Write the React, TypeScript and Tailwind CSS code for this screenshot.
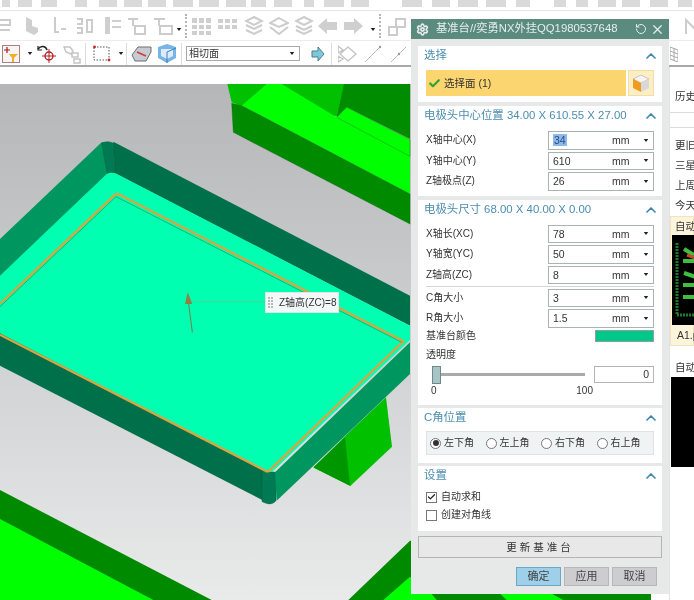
import { ChevronUp, RotateCw, Settings, X, Check } from "lucide-react";
import type { ReactNode } from "react";

const FONT = "font-['Liberation_Sans','Noto_Sans_CJK_SC',sans-serif]";

// [left gap, width] of the faded icons in the clipped top row
const TOP_ICONS = [[2, 8], [8, 14], [9, 16], [18, 12], [12, 18], [7, 18], [6, 18], [7, 20], [6, 20], [7, 20], [5, 15], [8, 18], [12, 10], [10, 20], [7, 18], [33, 20], [10, 18], [8, 20], [8, 20], [10, 14], [24, 12], [10, 12], [10, 18], [6, 18], [10, 18], [10, 14]];

const Caret = ({ className = "" }: { className?: string }) => (
  <svg viewBox="0 0 6 4" className={`h-[3px] w-[6px] shrink-0 ${className}`}>
    <path d="M0 0h6L3 4Z" fill="#222" />
  </svg>
);

const DottedSep = ({ className = "" }: { className?: string }) => (
  <span className={`h-[24px] w-px shrink-0 border-l-2 border-dotted border-[#b5b5b5] ${className}`} />
);

const Sep = ({ className = "" }: { className?: string }) => (
  <span className={`h-[22px] w-px shrink-0 bg-[#dcdcdc] ${className}`} />
);

const Faded = ({ d, className = "" }: { d: string; className?: string }) => (
  <svg viewBox="0 0 20 20" className={`h-[20px] w-[20px] shrink-0 ${className}`}>
    <path d={d} fill="none" stroke="#cccccc" strokeWidth="2" />
  </svg>
);

const Solid = ({ d, className = "" }: { d: string; className?: string }) => (
  <svg viewBox="0 0 20 20" className={`h-[20px] w-[20px] shrink-0 ${className}`}>
    <path d={d} fill="#cfcfcf" />
  </svg>
);

const TopRow = () => (
  <div className="flex h-[11px] items-start overflow-hidden border-b border-[#e6e6e6]">
    {TOP_ICONS.map(([gap, w], i) => (
      <span key={i} className="h-[7px] shrink-0 bg-[#dadada]" style={{ marginLeft: gap, width: w }} />
    ))}
  </div>
);

const MiddleRow = () => (
  <div className="flex h-[30px] items-center overflow-hidden border-b border-[#ececec]">
    <Faded d="M-2 4h16v5H0v5h14" className="-ml-1" />
    <Solid d="M4 1l6 3v6l6 2v4l-4 3-8-4Z" className="ml-[6px]" />
    <Faded d="M6 1v15h4M12 13h5" className="ml-[7px]" />
    <Faded d="M2 3h5v5H2M2 12h5v5H2M12 4h5v12h-5Z" className="ml-[6px]" />
    <Solid d="M2 1h5v17H2ZM9 4h9v2H9ZM9 10h9v2H9Z" className="ml-[8px]" />
    <Faded d="M1 3h10M6 3v7M8 10h10v8H8Z" className="ml-[4px]" />
    <Faded d="M1 3h11M6 3v7M7 10h12v8H7Z" className="ml-[6px]" />
    <Caret className="ml-[3px] mt-[8px]" />
    <DottedSep className="ml-[3px]" />
    <Solid d="M0 2h5v5H0ZM7 2h5v5H7ZM14 2h5v5h-5ZM0 9h5v4H0ZM7 9h5v4H7ZM14 9h5v4h-5ZM0 15h5v4H0ZM7 15h5v4H7ZM14 15h5v4h-5Z" className="ml-[5px]" />
    <Solid d="M0 3h5v4H0ZM7 3h5v4H7ZM14 3h5v4h-5ZM0 9h5v4H0ZM7 9h5v4H7ZM14 9h5v4h-5Z" className="ml-[6px]" />
    <Faded d="M10 1l8 4-8 4-8-4ZM2 9l8 4 8-4M2 14l8 4 8-4" className="ml-[6px]" />
    <Faded d="M10 2l9 5-9 4-9-4ZM1 11l9 7 9-7" className="ml-[5px]" />
    <Faded d="M10 1l8 4-8 4-8-4ZM2 10l8 4 8-4M2 14l8 4 8-4" className="ml-[5px]" />
    <Solid d="M0 10l9-8v4h10v8H9v4Z" className="ml-[4px]" />
    <Solid d="M20 10l-9-8v4H1v8h10v4Z" className="ml-[5px]" />
    <Caret className="ml-[7px] mt-[8px]" />
    <DottedSep className="ml-[3px]" />
    <Faded d="M2 11h8v8H2ZM9 3h9v8H9Z" className="ml-[6px]" />
    <Faded d="M3 18V4l14 14V4" className="ml-[276px]" />
  </div>
);

const ToolRow = () => (
  <div className="flex h-[24px] items-center pt-[1px]">
    <svg viewBox="0 0 18 18" className="ml-[2px] h-[18px] w-[18px] shrink-0">
      <rect x=".5" y=".5" width="17" height="17" fill="#f8f4f2" stroke="#a98080" />
      <path d="M7 9h9l-4 4v4h-2v-4Z" fill="#edb02a" />
      <path d="M2 5h6M5 2v6" stroke="#a21d1d" strokeWidth="1.2" />
    </svg>
    <Caret className="ml-[7px]" />
    <svg viewBox="0 0 20 20" className="ml-[4px] h-[20px] w-[20px] shrink-0">
      <path d="M1 5c3-4 8-3 9 1" fill="none" stroke="#222" strokeWidth="1.5" />
      <path d="M1 2v4h4" fill="none" stroke="#222" strokeWidth="1.2" />
      <circle cx="12" cy="12" r="4" fill="none" stroke="#b32020" strokeWidth="1.4" />
      <path d="M12 5v14M5 12h14" stroke="#b32020" />
    </svg>
    <svg viewBox="0 0 20 20" className="ml-[5px] h-[20px] w-[20px] shrink-0">
      <path d="M2 3h6l3 4-2 3-5-2ZM10 9h6v4h-6ZM12 15h6v4h-6Z" fill="none" stroke="#c5c5c5" strokeWidth="1.5" />
    </svg>
    <Sep className="ml-[3px]" />
    <svg viewBox="0 0 18 18" className="ml-[7px] h-[18px] w-[18px] shrink-0">
      <rect x="1" y="2" width="15" height="13" fill="none" stroke="#555" strokeDasharray="1.5 1.5" />
      <circle cx="1.5" cy="2" r="1.4" fill="#c72626" />
      <circle cx="16" cy="15" r="1.4" fill="#c72626" />
    </svg>
    <Caret className="ml-[7px]" />
    <Sep className="ml-[2px]" />
    <svg viewBox="0 0 21 18" className="ml-[4px] h-[18px] w-[21px] shrink-0">
      <path d="M1 10l6-8h13v5l-5 9H4Z" fill="#c6ccd2" stroke="#6d6d6d" />
      <path d="M6 7l9 4" stroke="#cf3a3a" strokeWidth="1.6" />
    </svg>
    <svg viewBox="0 0 20 19" className="ml-[5px] h-[19px] w-[20px] shrink-0">
      <path d="M1 3l9-3 9 3v11l-9 5-9-5Z" fill="#79b4e6" />
      <path d="M4 5h12v7l-6 3-6-3Z" fill="#dcebf7" />
      <path d="M10 8v11M19 4l-9 4" stroke="#3d7cc0" />
    </svg>
    <Sep className="ml-[4px]" />
    <div className="ml-[4px] flex h-[15px] w-[114px] shrink-0 items-center justify-between border border-[#a8a8a8] bg-white pl-[2px] pr-[4px]">
      <span className="text-[10px] leading-none text-[#333]">相切面</span>
      <Caret />
    </div>
    <svg viewBox="0 0 14 14" className="ml-[11px] h-[14px] w-[14px] shrink-0">
      <path d="M1 4h6V0l6 7-6 7v-4H1Z" fill="#7fc8da" stroke="#4a7f95" />
    </svg>
    <Sep className="ml-[6px]" />
    <svg viewBox="0 0 20 18" className="ml-[6px] h-[18px] w-[20px] shrink-0">
      <path d="M10 2l8 7-8 7-8-7ZM0 1l5 4-5 3ZM0 11l5 3-5 3Z" fill="none" stroke="#c2c2c2" strokeWidth="1.3" />
    </svg>
    <svg viewBox="0 0 18 18" className="ml-[6px] h-[18px] w-[18px] shrink-0">
      <path d="M1 17L16 2" stroke="#b9b9b9" />
      <circle cx="16" cy="2" r="1.2" fill="#999" />
    </svg>
    <svg viewBox="0 0 18 18" className="ml-[8px] h-[18px] w-[18px] shrink-0">
      <path d="M1 17L16 2" stroke="#b9b9b9" />
      <circle cx="9" cy="9" r="1.2" fill="#999" />
    </svg>
    <svg viewBox="0 0 8 16" className="ml-[262px] h-[16px] w-[8px] shrink-0">
      <path d="M0 1l8 3v12L0 13ZM0 5l8 3M0 9l8 3M4 2v13" fill="none" stroke="#a9a9a9" />
    </svg>
  </div>
);

// drawn in 3x coordinates, same scale as the part left of the dialog
const Scene = () => (
  <svg viewBox="0 0 1953 1548" className="h-[516px] w-[651px] shrink-0">
    <path d="M682 0h360v100l-320-35-27-10Z" fill="#00c000" />
    <path d="M1032 0h198v165l-190-95-30 30Z" fill="#008c00" />
    <path d="M725 65L800 0h45L1010 100L1230 215v115Z" fill="#00ff00" />
    <path d="M1040 70l190 97v50L1010 100Z" fill="#00ff00" stroke="#0a6a0a" strokeWidth="1" />
    <path d="M695 58l30 7 505 265v90L700 145Z" fill="#008a00" stroke="#0a5a0a" strokeWidth="1" />

    <path d="M1158 940l18 148-125 118-110-55 100-100Z" fill="#00c000" />
    <path d="M1035 1060l15 145-110-55Z" fill="#009600" />

    <path d="M0 1218L635 1548H0Z" fill="#008a00" />
    <path d="M0 1305L460 1548H0Z" fill="#00ff00" />
    <path d="M1045 1548L1230 1370L1953 1500V1548Z" fill="#008a00" />
    <path d="M1150 1548l80-70 60 70ZM1470 1500h130l90 48h-170ZM1230 1500h40l40 48h-80Z" fill="#00ff00" />

    <path d="M0 465L305 175L325 173L345 265L0 580Z" fill="#00965f" />
    <path d="M340 173L1230 635V725L345 268Z" fill="#00704a" />
    <path d="M305 178q18-10 36 0l6 90-25 2Z" fill="#007a52" stroke="#004e33" strokeWidth="1" />
    <path d="M0 745L795 1160L810 1260L0 845Z" fill="#00704a" />
    <path d="M785 1160l45 5-2 85q-12 14-30 8l-12-5Z" fill="#007a52" stroke="#004e33" strokeWidth="1" />
    <path d="M825 1165L1230 775V870L830 1250Z" fill="#00965f" />
    <path d="M0 575L320 270q18-8 35 2L1230 725V768L820 1160q-10 8-25 0L0 748Z" fill="#00ffb0" />
    <path d="M0 660L345 332q7-4 14 0L1210 772L808 1160q-6 4-12 0L0 752" fill="none" stroke="#d9a441" strokeWidth="7" />
    <path d="M0 668L348 338L1205 775" fill="none" stroke="#0f7a2e" strokeWidth="1.5" />

    <path d="M580 653H800" stroke="#6fbf85" strokeWidth="2" />
    <path d="M566 660L577 745" stroke="#7d7f45" strokeWidth="3" />
    <path d="M563 625l-8 35h22Z" fill="#8f8048" />
  </svg>
);

const SectionHead = ({ title }: { title: string }) => (
  <div className="flex h-[20px] items-center justify-between pl-[6px] pr-[3px]">
    <span className="text-[11.4px] leading-none text-[#4c8db0]">{title}</span>
    <ChevronUp size={16} strokeWidth={2.5} className="text-[#3d86ad]" />
  </div>
);

const Section = ({ title, children, className = "" }: { title: string; children: ReactNode; className?: string }) => (
  <section className={`shrink-0 bg-white ${className}`}>
    <SectionHead title={title} />
    {children}
  </section>
);

const Field = ({ label, value, selected }: { label: string; value: string; selected?: boolean }) => (
  <div className="flex h-[20.5px] items-center justify-between pl-[8px] pr-[8px]">
    <span className="text-[10px] leading-none text-[#333]">{label}</span>
    <div className="flex h-[18.5px] w-[106px] items-center border border-[#a9b3b3] bg-white pl-[4px] pr-[4px] text-[10.5px] text-[#333]">
      <span className={`w-[50px] leading-none ${selected ? "text-[#1d4f8f]" : ""}`}>
        {selected ? <span className="bg-[#8fb8e8] px-px">{value}</span> : value}
      </span>
      <span className="ml-[9px] text-[10.5px] leading-none">mm</span>
      <Caret className="ml-auto" />
    </div>
  </div>
);

const Radio = ({ label, on }: { label: string; on?: boolean }) => (
  <label className="flex w-[55.5px] items-center gap-[3px] text-[10px] leading-none text-[#333]">
    <span className="flex h-[11px] w-[11px] shrink-0 items-center justify-center rounded-full border border-[#777] bg-white">
      {on && <span className="h-[6px] w-[6px] rounded-full bg-[#333]" />}
    </span>
    {label}
  </label>
);

const CheckRow = ({ label, on }: { label: string; on?: boolean }) => (
  <div className="flex h-[18px] items-center gap-[4px] pl-[8px] text-[10px] leading-none text-[#333]">
    <span className="flex h-[11px] w-[11px] items-center justify-center border border-[#777] bg-white">
      {on && <Check size={10} strokeWidth={3.5} className="text-[#222]" />}
    </span>
    {label}
  </div>
);

const FootButton = ({ label, primary }: { label: string; primary?: boolean }) => (
  <button className={`h-[19px] w-[45px] border text-[11px] leading-none text-[#444] ${primary ? "border-[#6aa7c9] bg-[#9fd0ea]" : "border-[#b7b7b7] bg-[#cdcdcf]"}`}>
    {label}
  </button>
);

const Dialog = () => (
  <div className="absolute left-[411px] top-[19px] flex h-[575px] w-[258px] flex-col bg-[#e7e8e8]">
    <div className="flex h-[20px] shrink-0 items-center bg-[#5b8a7f] pl-[5px] pr-[4px] text-[#e4eeec]">
      <Settings size={13} strokeWidth={3} />
      <span className="ml-[7px] text-[11.3px] leading-none">基准台//奕勇NX外挂QQ1980537648</span>
      <RotateCw size={12} strokeWidth={2} className="ml-auto -scale-x-100" />
      <X size={15} strokeWidth={2} className="ml-[3px]" />
    </div>

    <div className="flex flex-col gap-[4px] px-[7px] pt-[7px]">
      <Section title="选择" className="h-[56px]">
        <div className="mt-[4px] flex h-[26px] pl-[8px] pr-[8px]">
          <div className="flex w-[200px] items-center bg-[#fbd570] pl-[2px] text-[10.5px] text-[#333]">
            <Check size={13} strokeWidth={4} className="text-[#2fa52f]" />
            <span className="ml-[3px] leading-none">选择面 (1)</span>
          </div>
          <div className="ml-[2px] flex w-[26px] items-center justify-center border border-[#f3dfa6] bg-[#fdeec4]">
            <svg viewBox="0 0 18 18" className="h-[18px] w-[18px]">
              <path d="M9 1l8 4-8 4-8-4Z" fill="#f5f5f5" stroke="#999" strokeWidth=".5" />
              <path d="M1 5l8 4v9l-8-4Z" fill="#f29a1d" />
              <path d="M17 5l-8 4v9l8-4Z" fill="#d8d8d8" />
            </svg>
          </div>
        </div>
      </Section>

      <Section title="电极头中心位置 34.00 X 610.55 X 27.00" className="h-[90px]">
        <div className="mt-[4px]">
          <Field label="X轴中心(X)" value="34" selected />
          <Field label="Y轴中心(Y)" value="610" />
          <Field label="Z轴极点(Z)" value="26" />
        </div>
      </Section>

      <Section title="电极头尺寸 68.00 X 40.00 X 0.00" className="h-[205px]">
        <div className="mt-[3.5px]">
          <Field label="X轴长(XC)" value="78" />
          <Field label="Y轴宽(YC)" value="50" />
          <Field label="Z轴高(ZC)" value="8" />
          <div className="mx-[8px] mb-[0.5px] mt-[1px] h-px bg-[#d5d5d5]" />
          <Field label="C角大小" value="3" />
          <Field label="R角大小" value="1.5" />
        </div>
        <div className="flex h-[14px] items-center justify-between pl-[8px] pr-[8px]">
          <span className="text-[10px] leading-none text-[#333]">基准台颜色</span>
          <span className="h-[12px] w-[59px] border border-[#8f9f9a] bg-[#00c88a]" />
        </div>
        <div className="mt-[5px] pl-[8px] text-[10px] leading-[14px] text-[#333]">透明度</div>
        <div className="mt-[4px] flex h-[18px] items-center pl-[14px] pr-[8px]">
          <span className="h-[18px] w-[9px] border border-[#6d8a8a] bg-[#a9c4c4]" />
          <span className="h-[3px] w-[144px] bg-[#aaaaaa]" />
          <div className="ml-[9px] flex h-[17px] flex-1 items-center justify-end border border-[#b5b5b5] pr-[4px] text-[10.5px] leading-none text-[#333]">0</div>
        </div>
        <div className="flex w-[175px] justify-between pl-[13px] text-[10px] leading-[13px] text-[#333]">
          <span>0</span>
          <span>100</span>
        </div>
      </Section>

      <Section title="C角位置" className="-mt-px h-[55px]">
        <div className="mx-[8px] mt-[3px] flex h-[24px] items-center border border-[#dfe3e3] bg-[#eff3f4] pl-[3px]">
          <Radio label="左下角" on />
          <Radio label="左上角" />
          <Radio label="右下角" />
          <Radio label="右上角" />
        </div>
      </Section>

      <Section title="设置" className="-mt-px h-[65px]">
        <div className="mt-[2px] flex flex-col">
          <CheckRow label="自动求和" on />
          <CheckRow label="创建对角线" />
        </div>
      </Section>

      <button className="mt-px h-[22px] shrink-0 border border-[#b5b5b5] bg-[#e8e8e8] text-[10.5px] leading-none tracking-[3px] text-[#333]">
        更新基准台
      </button>

      <div className="mt-[5px] flex justify-end gap-[3px] pr-[5px]">
        <FootButton label="确定" primary />
        <FootButton label="应用" />
        <FootButton label="取消" />
      </div>
    </div>
  </div>
);

const HistoryPanel = () => (
  <aside className="ml-[18px] flex min-w-0 flex-1 flex-col overflow-hidden border-l border-[#e3e3e3] bg-white pt-[14px] text-[10.5px] leading-none text-[#333]">
    <div className="flex h-[32px] shrink-0 items-center whitespace-nowrap border-b border-[#dcdcdc] pl-[5px]">历史记录</div>
    <div className="h-[15px] shrink-0 border-b border-[#dcdcdc]" />
    <div className="flex shrink-0 flex-col whitespace-nowrap pl-[5px] pt-[7px]">
      <span className="flex h-[20px] items-center">更旧</span>
      <span className="flex h-[20px] items-center">三星期前</span>
      <span className="flex h-[20px] items-center">上周</span>
      <span className="flex h-[20px] items-center">今天</span>
    </div>
    <div className="mt-px h-[130px] shrink-0 border border-[#f0e4c0] bg-[#fdf4dc] pl-px">
      <div className="flex h-[18px] items-center whitespace-nowrap pl-[3px]">自动保存</div>
      <div className="h-[90px] w-[30px] bg-black">
        <svg viewBox="0 0 24 90" className="h-[90px] w-[24px]">
          <path d="M5 8v72h18" fill="none" stroke="#1f7a2c" strokeWidth="3" strokeDasharray="2 1" />
          <path d="M12 14l10 6M11 26h13M12 38l12 4M11 50h13M11 62h13" stroke="#3fbf3f" strokeWidth="4" />
          <path d="M15 20l8 3" stroke="#c9462a" strokeWidth="3" />
        </svg>
      </div>
      <div className="flex h-[20px] items-center whitespace-nowrap pl-[5px]">A1.prt</div>
    </div>
    <div className="mt-[12px] flex h-[19px] shrink-0 items-center whitespace-nowrap pl-[5px]">自动保存</div>
    <div className="ml-px h-[90px] w-full shrink-0 bg-black" />
  </aside>
);

export default function App() {
  return (
    <div className={`relative h-[600px] w-[694px] overflow-hidden bg-white blur-[0.5px] ${FONT}`}>
      <TopRow />
      <MiddleRow />
      <ToolRow />
      <div className="h-[2px] bg-[#a8a8a8]" />
      <div className="flex h-[533px]">
        <div className="mt-[17px] flex h-[516px] w-[651px] shrink-0 bg-linear-to-b from-[#b4b6b8] to-[#e9ebeb]">
          <Scene />
        </div>
        <HistoryPanel />
      </div>
      <div className="absolute left-[265px] top-[292px] flex h-[21px] w-[74px] items-center border border-[#dfe6e6] bg-[#f4f7f7] text-[10px] leading-none text-[#333]">
        <span className="ml-[2px] grid grid-cols-2 gap-px">
          {[0, 1, 2, 3, 4, 5, 6, 7].map((n) => (
            <i key={n} className="h-[2px] w-[2px] bg-[#b9b9b9]" />
          ))}
        </span>
        <span className="ml-[6px] whitespace-nowrap">Z轴高(ZC)=8</span>
      </div>
      <Dialog />
    </div>
  );
}
